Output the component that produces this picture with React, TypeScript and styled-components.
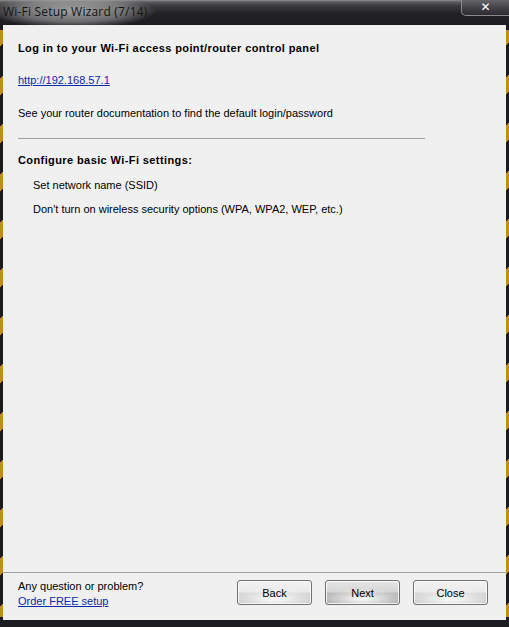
import React from "react";
import styled, { createGlobalStyle } from "styled-components";

const Global = createGlobalStyle`
  html, body { margin: 0; padding: 0; background: #1d1d21; }
  #root { width: 509px; height: 627px; }
`;

const Frame = styled.div`
  width: 509px;
  height: 627px;
  display: flex;
  flex-direction: column;
  position: relative;
  overflow: hidden;
  background:
    linear-gradient(180deg, #8e8e8e 0px, #5a5a5c 2px, #3a3a3e 6px, #222226 14px, #1d1d21 26px, #1d1d21 100%);
`;

const Stripes = styled.div<{ $side: "left" | "right" }>`
  position: absolute;
  top: 30px;
  bottom: 10px;
  ${(p) => (p.$side === "left" ? "left: 0;" : "right: 0;")}
  width: 4px;
  background: repeating-linear-gradient(
    135deg,
    #e0a01a 0px,
    #e0a01a 12px,
    #1b1b1d 12px,
    #1b1b1d 34px
  );
  opacity: 0.85;
`;

const TitleBar = styled.div`
  height: 25px;
  display: flex;
  align-items: flex-start;
  position: relative;
`;

const TitleGlow = styled.div`
  position: absolute;
  left: -10px;
  top: -6px;
  width: 165px;
  height: 34px;
  border-radius: 50%;
  background: radial-gradient(ellipse at center, rgba(200,200,200,0.75) 0%, rgba(170,170,170,0.55) 45%, rgba(120,120,120,0) 72%);
`;

const Title = styled.div`
  position: relative;
  margin: 4px 0 0 3px;
  font-family: "Open Sans", "Noto Sans", sans-serif;
  font-size: 12px;
  line-height: 15px;
  color: #141414;
  letter-spacing: 0.2px;
`;

const CloseCaption = styled.div`
  position: absolute;
  right: 0;
  top: -1px;
  width: 47px;
  height: 16px;
  border: 1px solid #8a8a8c;
  border-top: none;
  border-right: none;
  border-radius: 0 0 0 5px;
  background: linear-gradient(180deg, #6a6a6e 0%, #45454a 50%, #2c2c31 100%);
  display: flex;
  align-items: center;
  justify-content: center;
  color: #ffffff;
  font-family: "DejaVu Sans", sans-serif;
  font-weight: bold;
  font-size: 12px;
`;

const Panel = styled.div`
  flex: 1;
  margin: 0 3px 7px 3px;
  background: #f0f0f0;
  display: flex;
  flex-direction: column;
  position: relative;
  font-family: "Liberation Sans", Arial, sans-serif;
  font-size: 11px;
  line-height: 14px;
  color: #000;
`;

const Body = styled.div`
  flex: 1;
  padding: 16px 15px 0 15px;
  display: flex;
  flex-direction: column;
`;

const Heading = styled.div<{ $mt?: number }>`
  font-weight: bold;
  letter-spacing: 0.4px;
  margin-top: ${(p) => p.$mt ?? 0}px;
`;

const Link = styled.a<{ $mt?: number }>`
  color: #0b2aa6;
  text-decoration: underline;
  margin-top: ${(p) => p.$mt ?? 0}px;
  align-self: flex-start;
  cursor: pointer;
`;

const Line = styled.div<{ $mt?: number; $indent?: number }>`
  margin-top: ${(p) => p.$mt ?? 0}px;
  padding-left: ${(p) => p.$indent ?? 0}px;
`;

const Rule = styled.div`
  margin-top: 18px;
  width: 407px;
  height: 1px;
  background: #a0a0a0;
`;

const Footer = styled.div`
  border-top: 1px solid #a0a0a0;
  height: 48px;
  box-sizing: border-box;
  display: flex;
  align-items: flex-start;
  padding: 7px 18px 0 15px;
`;

const Help = styled.div`
  display: flex;
  flex-direction: column;
  flex: 1;
  margin-top: -1px;
  line-height: 15px;
`;

const Buttons = styled.div`
  display: flex;
  gap: 13px;
`;

const Button = styled.button<{ $default?: boolean }>`
  width: 75px;
  height: 25px;
  box-sizing: border-box;
  border: 1px solid #707070;
  border-radius: 3px;
  font-family: "Liberation Sans", Arial, sans-serif;
  font-size: 11px;
  color: #000;
  padding: 0;
  box-shadow: inset 0 0 0 1px rgba(255,255,255,0.8);
  background:
    radial-gradient(ellipse 60% 45% at 50% 78%, rgba(255,255,255,0.95) 0%, rgba(255,255,255,0) 100%),
    ${(p) =>
      p.$default
        ? "linear-gradient(180deg, #e6e6e6 0%, #d6d6d6 45%, #b4b4b4 55%, #a8a8a8 100%)"
        : "linear-gradient(180deg, #f2f2f2 0%, #ebebeb 45%, #d2d2d2 55%, #c6c6c6 100%)"};
`;

export default function App() {
  return (
    <>
      <Global />
      <Frame>
        <Stripes $side="left" />
        <Stripes $side="right" />
        <TitleBar>
          <TitleGlow />
          <Title>Wi-Fi Setup Wizard (7/14)</Title>
          <CloseCaption>✕</CloseCaption>
        </TitleBar>
        <Panel>
          <Body>
            <Heading>Log in to your Wi-Fi access point/router control panel</Heading>
            <Link $mt={18}>http://192.168.57.1</Link>
            <Line $mt={19}>See your router documentation to find the default login/password</Line>
            <Rule />
            <Heading $mt={14}>Configure basic Wi-Fi settings:</Heading>
            <Line $mt={11} $indent={15}>Set network name (SSID)</Line>
            <Line $mt={10} $indent={15}>Don't turn on wireless security options (WPA, WPA2, WEP, etc.)</Line>
          </Body>
          <Footer>
            <Help>
              <span>Any question or problem?</span>
              <Link>Order FREE setup</Link>
            </Help>
            <Buttons>
              <Button>Back</Button>
              <Button $default>Next</Button>
              <Button>Close</Button>
            </Buttons>
          </Footer>
        </Panel>
      </Frame>
    </>
  );
}
